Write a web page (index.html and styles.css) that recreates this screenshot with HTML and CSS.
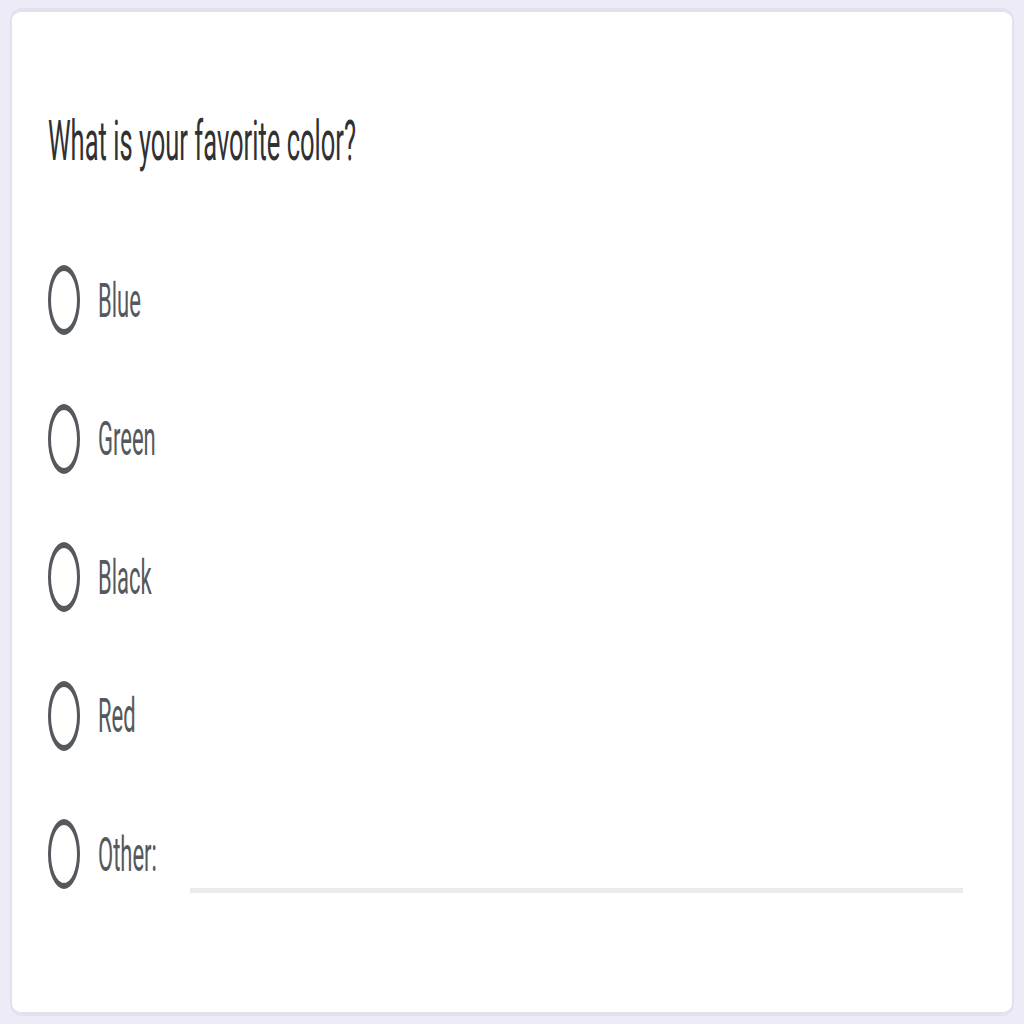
FILE: index.html
```html
<!DOCTYPE html>
<html lang="en">
<head>
<meta charset="utf-8">
<title>Favorite color</title>
<link rel="stylesheet" href="styles.css">
</head>
<body>
<main class="card">
  <div class="question"><span class="stretch">What is your favorite color?</span></div>
  <div class="options">
    <label class="option"><span class="radio"></span><span class="label"><span class="stretch">Blue</span></span></label>
    <label class="option"><span class="radio"></span><span class="label"><span class="stretch">Green</span></span></label>
    <label class="option"><span class="radio"></span><span class="label"><span class="stretch">Black</span></span></label>
    <label class="option"><span class="radio"></span><span class="label"><span class="stretch">Red</span></span></label>
    <label class="option other"><span class="radio"></span><span class="label other-label"><span class="stretch">Other:</span></span><span class="other-input"></span></label>
  </div>
</main>
</body>
</html>
```
FILE: styles.css
```css
html, body {
  margin: 0;
  padding: 0;
}
body {
  background: #edebf8;
  font-family: Roboto, "Liberation Sans", sans-serif;
  width: 1024px;
  height: 1024px;
  padding: 8px 10px 0 10px;
  box-sizing: border-box;
}
.card {
  box-sizing: border-box;
  height: 1008px;
  background: #ffffff;
  border-radius: 12px;
  border-style: solid;
  border-color: #e3e2ec;
  border-width: 4px 2px 4px 2px;
  padding: 98px 49px 0 36px;
}
.question {
  height: 60px;
  display: flex;
  align-items: center;
  font-size: 25.5px;
  color: #303134;
}
.stretch {
  display: inline-block;
  transform: scaleY(2.2);
  transform-origin: center center;
  white-space: nowrap;
}
.options {
  margin-top: 95px;
  display: flex;
  flex-direction: column;
  gap: 68.5px;
}
.option {
  height: 70px;
  display: flex;
  align-items: center;
  gap: 18px;
}
.radio {
  box-sizing: border-box;
  width: 32px;
  height: 70px;
  border-radius: 50%;
  border-style: solid;
  border-color: #55585d;
  border-width: 6px 3px;
  flex: none;
}
.label {
  font-size: 22px;
  color: #55585d;
}
.other-label {
  width: 74px;
  flex: none;
}
.other-input {
  flex: 1;
  align-self: flex-end;
  height: 5px;
  margin-bottom: -4px;
  background: #ebebeb;
}
```
